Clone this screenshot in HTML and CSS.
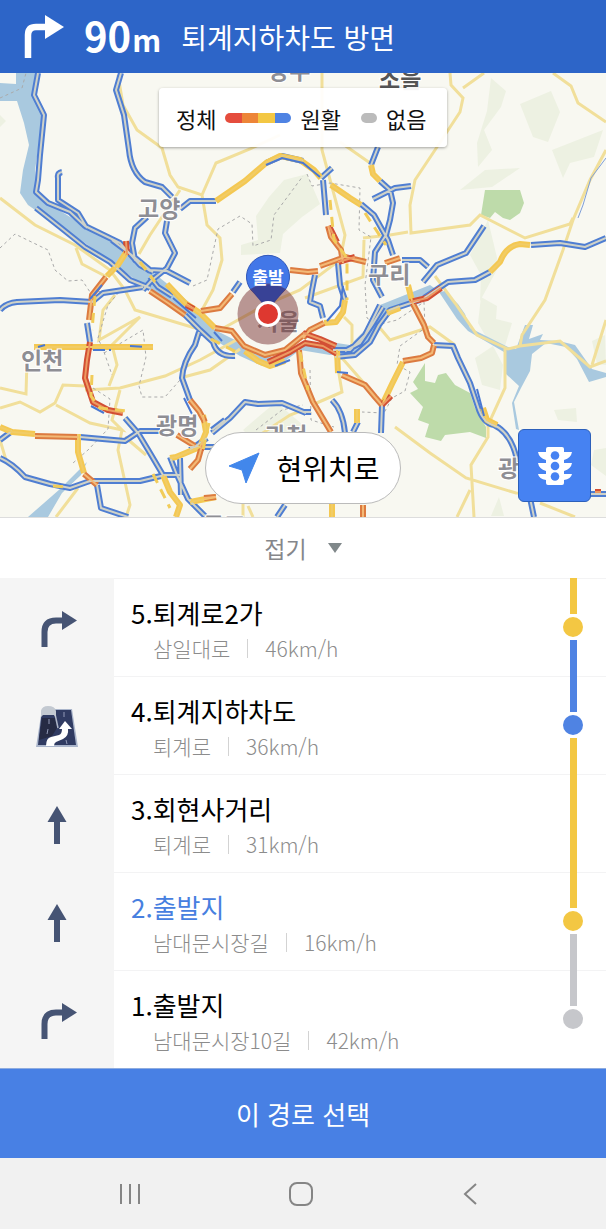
FILE: index.html
```
<!DOCTYPE html>
<html lang="ko">
<head>
<meta charset="utf-8">
<meta name="viewport" content="width=device-width, initial-scale=1">
<title>경로 안내</title>
<link rel="stylesheet" href="styles.css">
</head>
<body>
<svg class="sprite" aria-hidden="true">
  <symbol id="turn-right" viewBox="0 0 36 38"><path d="M3.500 37V22Q3.500 10.500 15 10.500H23" fill="none" stroke="currentColor" stroke-width="6"/><path d="M21 1L36 10.500L21 20Z" fill="currentColor"/></symbol>
  <symbol id="straight" viewBox="0 0 20 38"><path d="M10 0L19.500 16H13V38H7V16H.5Z" fill="currentColor"/></symbol>
</svg>

<header class="guide">
  <svg class="guide-arrow" viewBox="0 0 40 44" aria-label="우회전"><path d="M4 43V20Q4 12 12 12H24" fill="none" stroke="#fff" stroke-width="6.500"/><path d="M21 0L40 12L21 24Z" fill="#fff"/></svg>
  <p class="distance">90<span class="unit">m</span></p>
  <h1 class="direction">퇴계지하차도 방면</h1>
</header>

<main class="content">
<section class="map" aria-label="교통 지도">
<svg class="map-art" viewBox="0 73 606 444" preserveAspectRatio="xMidYMid slice">
  <defs>
    <path id="blue" d="M38 73L34 95L44 115L40 155L38 180L36 192L48 203L70 212L85 226L120 243L140 265L153 272M62 172Q57 173 58 178V200L78 213L87 228M36 208L60 227L85 247L110 262L130 280L150 288M112 240L133 256L150 270L167 271L190 283M150 277L158 287L172 296M121 73L116 90L124 115L129 150Q131 172 145 182L162 187L172 197M180 209L190 201L216 201M147 217L135 228L132 243L135 260L150 271M167 221L165 233L175 253L167 268L152 280L143 290M0 310Q6 303 17 302L60 300L92 302L103 293L143 287M87 323L90 342M185 315L200 330L213 342Q217 357 235 356M199 332L195 345Q183 362 182 378L190 400M125 418L138 433L150 453L163 475L180 475M80 437L125 441L140 431L160 431M0 458Q12 463 25 477L50 484L70 488L90 481H140L165 475M97 485L101 508L128 517M212 433L230 418L245 402L258 404L282 403L306 413M170 457L177 475L188 499L205 516M207 438L190 450M180 458L181 495M215 447L190 447M266 163L282 156L303 161M321 178L332 168M323 180L326 215M338 263L340 285L345 300M315 275L312 290L310 302L320 306L323 318M378 147L371 165M380 181L390 190L393 203L390 220L386 235L375 252L373 280L382 297M373 199L395 188L411 186M361 204L374 215L388 240L393 255M402 260L420 260L428 267M423 282L437 265L466 253L484 226M424 298L448 282L475 280L490 272M531 245L560 243L585 247L606 238M333 350L350 350L365 335L380 305M335 357L355 355L370 342L379 325L390 310L420 300M345 351L360 343L372 325L383 307M434 345L453 346L458 358L470 383L478 407Q483 423 494 425Q513 434 518 465M530 498L534 517M590 494L606 494M382 405L381 433M332 400Q343 411 345 433M353 432L358 422M302 412L311 412M285 505L277 517M233 292L240 282M0 440L12 431M212 430L225 420"/>
    <path id="yellow" d="M216 201L245 181L266 163L280 156L300 160L314 170L321 178M331 185L350 198L361 205M34 347L153 347M127 251L118 265L107 276M167 284L185 303L200 313L215 328M245 351L258 361L270 366L285 361M371 165L373 174L380 181M345 300L343 312L336 322L324 323M490 272L500 262Q506 246 520 244L530 245M403 362L392 384L383 403M0 427L12 432L35 434M203 415L206 432L200 447L176 457L170 458M163 475L170 492L180 505L176 517M190 502L216 497M337 350L338 373M357 409L357 423M332 504V517M78 434V452L84 473M408 285L412 301M483 408L487 420L497 425M387 313L400 308"/>
    <path id="orange" d="M106 277L92 295L89 320M150 291L168 303L185 315M215 328L232 331L244 346L265 355L285 350L306 333M201 311L220 308L232 294M290 270L308 272L318 271M328 226L331 237L341 250L343 263M324 323L310 330L303 338M320 266L345 257L366 262M385 263L400 258M412 302L424 325L428 337L434 343M434 345L432 353L421 358L403 361M299 350L301 373L313 402L331 432M342 375L365 385L375 397L382 405M35 436L78 437M84 474L97 485M190 400L199 411L205 422M177 435L195 446M203 442L198 460L190 469M204 498L216 497M363 505V517"/>
    <path id="red" d="M126 241L127 255M90 342L87 360L85 378L93 402L108 410L123 413M186 305L194 309M268 362L290 352L305 343L323 346L337 354M303 333L320 339L336 346M329 226L337 242M338 262L355 257M410 302L427 298L441 288M382 405L391 396M201 446L205 448M595 492L601 492"/>
  </defs>
  <rect y="73" width="606" height="444" fill="#f8f8f1"/>
  <g fill="#edf1e2">
    <path d="M491 78L506 91L501 107L484 130L492 150L478 167L477 143L487 111ZM520 104L551 91L560 112L548 142L533 137ZM552 150L603 130L594 157L570 163L563 178ZM460 190L485 170L520 168L492 187ZM269 197L284 180L307 174L320 204L302 217L283 234L280 253L241 255V245L258 240L256 216ZM488 220L499 266L480 301L481 275L470 255ZM481 297L497 306L496 319L512 323L505 346L486 337L478 323ZM493 346L503 365L500 390L482 385L475 358ZM554 410L576 408L577 422L558 420ZM499 497L504 516H491ZM243 430L264 412L276 402L303 425V435H248ZM606 448L594 450L591 465L606 476ZM0 115L6 121L0 127Z"/>
    <path d="M605 335L592 341L597 364L606 365Z"/>
  </g>
  <g fill="#bedbaa">
    <path d="M485 190H520L524 203L520 213L510 220L503 218L495 212L490 218L481 215Z"/>
    <path d="M425 363V381L435 383L438 375L446 373L455 385L470 393L475 408L486 427V438L470 432L445 435L441 441L425 437L429 424L418 420L423 407L410 393L418 389L413 382Z"/>
  </g>
  <g fill="#a9c9df">
    <path d="M16 73H38L34 97L43 117L35 170L37 193L62 212L85 226L120 245L150 270L175 290L200 312L215 330L235 340L255 352L275 358L300 345L330 342L350 345L365 330L380 305L400 297L430 285L437 290L400 305L385 312L370 340L355 353L330 355L300 350L277 367L262 366L240 356L215 340L195 322L165 300L140 283L118 267L85 243L55 224L28 205L20 193L23 170L29 145L24 123L17 101H0V83L16 84Z"/>
    <path d="M439 292L445 291L458 304L465 314L470 328L508 347L516 349L525 325L533 325L529 339L543 334L540 340L559 341L575 345L592 369L606 373V377L589 382L577 359L566 347L546 343L532 354L530 371L521 388L514 402L519 430L516 429L512 403L519 386L506 374L504 352L468 331L457 319Z"/>
    <path d="M28 517L60 489L87 462L81 475L62 493L48 517Z"/>
  </g>
  <g fill="none" stroke="#f1df9a" stroke-width="3">
    <path d="M118 75L123 105L137 130L162 148L170 175L178 187L202 195L216 163L250 149L280 135M202 195L207 225L220 238L222 260L213 290L202 310M0 198L35 225L75 245L110 270L125 290L135 310L195 328M76 248L82 264L107 277M180 190L150 235L139 254M115 295L103 310L99 340L140 317L112 345L117 365L109 386M85 390L120 388L165 376L200 360L240 338M180 378L210 370L240 349M27 360L26 394L0 388M0 408L20 402L40 412L55 403L63 385L85 386M56 405L90 423L122 430L112 420L120 390M122 430L118 450L130 505L126 517M0 440L6 460M78 488L56 517M125 437L146 455"/>
    <path d="M322 73V150L345 235L340 260L300 290L265 305L220 330M340 142L370 163M450 73L451 85L463 98L460 112L435 150L415 180L410 205L411 233L470 225L480 215L525 238L570 224L573 218M484 73L463 88M553 73L571 86L578 103L606 122M606 150L590 180L573 220L563 250L545 300L522 335L520 346L508 349L477 335L455 303L435 276M606 320L592 365M520 346L560 341L590 367L606 361M505 347V388L488 425V437L471 465L474 517M470 490L457 517M395 427L430 453L466 478L516 493L606 494M540 503L575 517M380 328L390 340L430 327L455 345M363 238L390 235L408 232M364 240L363 277L305 298M344 317L352 325L352 349M312 405L342 392L335 350L370 390L382 403M252 440L290 415L303 410M243 517V503M253 517L248 506"/>
  </g>
  <path d="M606 158L591 178L583 205L578 218" fill="none" stroke="#7f9fd8" stroke-width="1"/>
  <path d="M0 98L22 88L26 73M0 248L15 234L48 250L55 270L68 281L82 280L90 292L120 291L108 305L98 338L104 352L112 375M104 353L143 330L146 357L139 386L142 397L165 397L180 380M93 388L110 399L108 429L88 450L73 463M193 286L207 280L218 229L240 216L252 224L253 246L271 240L274 215L303 176M307 174L312 186L330 183L360 188L359 230L371 237L365 285L367 318L377 325L397 320L424 302L425 328L400 346L397 365L410 372L405 391L392 398L384 413L362 412M310 370L311 420L334 427M256 430L282 410L303 405" fill="none" stroke="#aaa" stroke-width="1" stroke-dasharray="3 3"/>
  <g class="road-edge">
    <use href="#blue" stroke="#4f7ed2"/><use href="#yellow" stroke="#f4c852"/><use href="#orange" stroke="#dc7b40"/><use href="#red" stroke="#d24f34"/>
  </g>
  <g class="road-core">
    <use href="#blue" stroke="#cfd2c8"/><use href="#yellow" stroke="#f1cc66"/><use href="#orange" stroke="#f3b976"/><use href="#red" stroke="#ed9a62"/>
  </g>
  <g fill="none" stroke="#4a78d2" stroke-width="2">
    <path d="M38 347L45 345M93 350L111 350M130 346L144 347" stroke-dasharray="12 4"/>
    <path d="M184 398L192 414M91 406L104 413M275 366L290 360M173 298L196 318M214 332L222 341M337 372L348 373M102 285L90 299M343 286L340 306L327 321M477 389L484 416M266 165L282 158L303 163L320 177"/>
  </g>
  <g fill="none" stroke="#f1cc59" stroke-width="3" stroke-dasharray="10 7">
    <path d="M95 296L92 330M92 375L91 396L100 408L126 411M211 339L240 354M300 352L308 390M209 423L203 450M365 213L386 245M330 200L334 240L347 258L347 300M153 474L170 508M53 486L65 487M140 262L155 282"/>
  </g>
  <g class="place">
    <text x="138" y="217">고양</text><text x="368" y="283">구리</text><text x="21" y="369">인천</text><text x="156" y="434">광명</text><text x="265" y="444">과천</text><text x="498" y="477">광주</text><text x="203" y="534">군포</text><text x="268" y="79">양주</text><text x="257" y="330">서울</text><text class="near" x="379" y="88">소을</text>
  </g>
  <path d="M268 308L251 290A21.500 21.500 0 1 1 285 290Z" fill="#4277e8" stroke="#3158b9"/>
  <circle cx="268" cy="314" r="30.500" fill="#752b2b" fill-opacity=".48"/>
  <path d="M251 289Q268 280 285 289L268 311Z" fill="#26399b" fill-opacity=".65"/>
  <circle cx="268" cy="314" r="11.500" fill="#de3830" stroke="#fff" stroke-width="3"/>
  <text class="pin-label" x="268" y="284">출발</text>
</svg>
<div class="legend">
  <span>정체</span><span class="scale"><i class="jam"></i><i class="slow"></i><i class="mild"></i><i class="clear"></i></span><span>원활</span><span class="no-data"></span><span>없음</span>
</div>
<button class="locate" type="button"><svg viewBox="0 0 32 32" aria-hidden="true"><path d="M31 1L18 31L14 18L1 14Z" fill="#4287eb" stroke="#4287eb" stroke-linejoin="round"/></svg>현위치로</button>
<button class="traffic" type="button" aria-label="교통정보">
  <svg viewBox="0 0 36 40" aria-hidden="true"><path d="M9 3Q9 1 11 1H25Q27 1 27 3V6H35Q34 12 27 14V17H35Q34 23 27 25V28H35Q34 33 27 34V37Q27 39 25 39H11Q9 39 9 37V34Q2 33 1 28H9V25Q2 23 1 17H9V14Q2 12 1 6H9Z" fill="#fff"/><g fill="#4682f2"><circle cx="18" cy="9.500" r="4.300"/><circle cx="18" cy="20" r="4.300"/><circle cx="18" cy="30.500" r="4.300"/></g></svg>
</button>
</section>

<button class="fold" type="button">접기<svg viewBox="0 0 14 10" aria-hidden="true"><path d="M0 0H14L7 10Z" fill="#80888a"/></svg></button>

<ol class="steps">
  <li class="step">
    <div class="turn"><svg class="icon-turn" aria-label="우회전"><use href="#turn-right"/></svg></div>
    <div class="info"><h2>5.퇴계로2가</h2><p><span>삼일대로</span><span class="speed">46km/h</span></p></div>
    <div class="rail"><i class="seg mild"></i><i class="dot mild"></i><i class="seg clear"></i></div>
  </li>
  <li class="step">
    <div class="turn"><svg class="icon-under" viewBox="0 0 44 42" aria-label="지하차도 옆길">
      <path d="M7 3H37L43 41H1Z" fill="#aab5cb"/><path d="M7 4H36L41 39H3Z" fill="#303b62"/>
      <path d="M7 12H20L22 22L17 30L4 34Z" fill="#262b44"/>
      <path d="M20 8L23 22" stroke="#aeb5c6" stroke-width="1.500"/>
      <path d="M6 11V5Q7 0 13 0Q20 0 21 5V12L19 9H8Z" fill="#c3c9d1"/>
      <path d="M14 13V18M13 23L12 28M29 6V11M31 34L32 38" stroke="#929ab7" stroke-width="1"/>
      <path d="M11 40Q11 32 16 31L24 29Q27 28 27 23H24L30 15L37 23H33Q34 30 28 33L21 36Q19 37 19 40Z" fill="#fff"/>
    </svg></div>
    <div class="info"><h2>4.퇴계지하차도</h2><p><span>퇴계로</span><span class="speed">36km/h</span></p></div>
    <div class="rail"><i class="seg clear"></i><i class="dot clear"></i><i class="seg mild"></i></div>
  </li>
  <li class="step">
    <div class="turn"><svg class="icon-straight" aria-label="직진"><use href="#straight"/></svg></div>
    <div class="info"><h2>3.회현사거리</h2><p><span>퇴계로</span><span class="speed">31km/h</span></p></div>
    <div class="rail"><i class="seg mild"></i></div>
  </li>
  <li class="step current">
    <div class="turn"><svg class="icon-straight" aria-label="직진"><use href="#straight"/></svg></div>
    <div class="info"><h2>2.출발지</h2><p><span>남대문시장길</span><span class="speed">16km/h</span></p></div>
    <div class="rail"><i class="seg mild"></i><i class="dot mild"></i><i class="seg none"></i></div>
  </li>
  <li class="step">
    <div class="turn"><svg class="icon-turn" aria-label="우회전"><use href="#turn-right"/></svg></div>
    <div class="info"><h2>1.출발지</h2><p><span>남대문시장10길</span><span class="speed">42km/h</span></p></div>
    <div class="rail"><i class="seg none"></i><i class="dot none"></i><i class="seg"></i></div>
  </li>
</ol>
</main>

<button class="choose" type="button">이 경로 선택</button>
<nav class="system" aria-label="시스템">
  <button type="button" aria-label="최근 앱"><svg viewBox="0 0 28 28"><path d="M4 4V24M13 4V24M22 4V24"/></svg></button>
  <button type="button" aria-label="홈"><svg viewBox="0 0 28 28"><rect x="3" y="3" width="22" height="22" rx="7"/></svg></button>
  <button type="button" aria-label="뒤로"><svg viewBox="0 0 28 28"><path d="M19 4L8 14L19 24"/></svg></button>
</nav>
</body>
</html>
```
FILE: styles.css
```
* { box-sizing: border-box; }

body {
  margin: 0;
  min-height: 100vh;
  display: flex;
  flex-direction: column;
  background: #fff;
  color: #111;
  font-family: "Noto Sans CJK KR", sans-serif;
}

h1, h2, p, ol { margin: 0; padding: 0; font-weight: 400; }
button { border: 0; padding: 0; font: inherit; color: inherit; cursor: pointer; }
.sprite { display: none; }

.guide {
  height: 73px;
  flex: none;
  display: flex;
  align-items: center;
  padding: 0 24px;
  background: #2d65c8;
  color: #fff;
}
.guide-arrow { width: 40px; height: 44px; }
.distance { margin-left: 20px; font-size: 40px; font-weight: 700; line-height: 48px; }
.unit { margin-left: 1px; font-size: 30px; }
.direction { margin-left: 20px; font-size: 28px; line-height: 40px; }

.content { flex: 1; display: flex; flex-direction: column; }

.map { position: relative; flex: 1; min-height: 320px; overflow: hidden; background: #f8f8f1; }
.map-art { position: absolute; inset: 0; width: 100%; height: 100%; }
.road-edge, .road-core { fill: none; stroke-linejoin: round; }
.road-edge { stroke-width: 6px; }
.road-core { stroke-width: 2px; }
.place { fill: #8e8e94; stroke: #fff; stroke-width: 2px; paint-order: stroke; font-size: 23px; font-weight: 700; }
.near { fill: #555; }
.pin-label { fill: #fff; font-size: 17px; font-weight: 700; text-anchor: middle; }

.legend {
  position: absolute;
  top: 15px;
  left: 50%;
  transform: translateX(-50%);
  width: 288px;
  height: 59px;
  display: flex;
  align-items: center;
  padding-left: 17px;
  border-radius: 4px;
  background: rgba(255, 255, 255, .94);
  box-shadow: 0 1px 3px rgba(0, 0, 0, .35);
  font-size: 22px;
  white-space: nowrap;
}
.scale { display: flex; width: 66px; height: 10px; margin: 0 9px; border-radius: 5px; overflow: hidden; }
.scale i { flex: 1; }
.jam { background: #e54d3d; }
.slow { background: #ed8538; }
.mild { background: #f3c743; }
.clear { background: #4f83e3; }
.none { background: #c6c7cb; }
.no-data { width: 16px; height: 10px; margin: 0 9px 0 20px; border-radius: 5px; background: #bbb; }

.locate {
  position: absolute;
  bottom: 13px;
  left: 50%;
  transform: translateX(-50%);
  width: 196px;
  height: 72px;
  display: flex;
  align-items: center;
  justify-content: center;
  gap: 16px;
  padding-left: 2px;
  border: 1px solid #bbb;
  border-radius: 36px;
  background: #fff;
  color: #000;
  font-size: 28px;
  white-space: nowrap;
}
.locate svg { width: 32px; height: 32px; }

.traffic {
  position: absolute;
  right: 15px;
  bottom: 15px;
  width: 73px;
  height: 73px;
  display: grid;
  place-items: center;
  border: 1px solid #2d60ba;
  border-radius: 6px;
  background: #4682f2;
}
.traffic svg { width: 36px; height: 40px; }

.fold {
  height: 61px;
  flex: none;
  display: flex;
  align-items: center;
  justify-content: center;
  gap: 21px;
  border-top: 1px solid #ddd;
  background: #fff;
  color: #85878b;
  font-size: 23px;
}
.fold svg { width: 14px; height: 10px; }

.steps { list-style: none; flex: none; }
.step { display: grid; grid-template-columns: 114px 1fr 66px; min-height: 98px; box-shadow: inset 0 1px #f3f3f4; }
.turn { display: grid; place-items: center; padding-top: 3px; background: #f5f5f5; color: #465474; }
.icon-turn { width: 36px; height: 38px; margin-left: 4px; }
.icon-under { width: 44px; height: 42px; }
.icon-straight { width: 20px; height: 38px; }
.info { padding: 17px 0 10px 17px; }
.info h2 { color: #000; font-size: 26px; line-height: 36px; }
.info p { display: flex; align-items: center; padding-left: 22px; color: #8c8c8c; font-size: 21px; font-weight: 300; line-height: 34px; }
.speed { display: flex; align-items: center; }
.speed::before { content: ""; width: 1px; height: 19px; margin: 0 17px; background: #d3d3d3; }
.current h2 { color: #4780e0; }

.rail { display: flex; flex-direction: column; align-items: center; gap: 3px; }
.seg { width: 7px; flex: 1; }
.dot { width: 20px; height: 20px; border-radius: 50%; }

.choose { height: 90px; flex: none; background: #4880e4; border-top: 1px solid #8eacdf; color: #fff; font-size: 26px; }

.system { height: 71px; flex: none; display: flex; align-items: center; justify-content: center; gap: 142px; padding-right: 4px; background: #f1f1f1; }
.system button { display: grid; background: none; }
.system svg { width: 28px; height: 28px; fill: none; stroke: #858585; stroke-width: 2; }
```
